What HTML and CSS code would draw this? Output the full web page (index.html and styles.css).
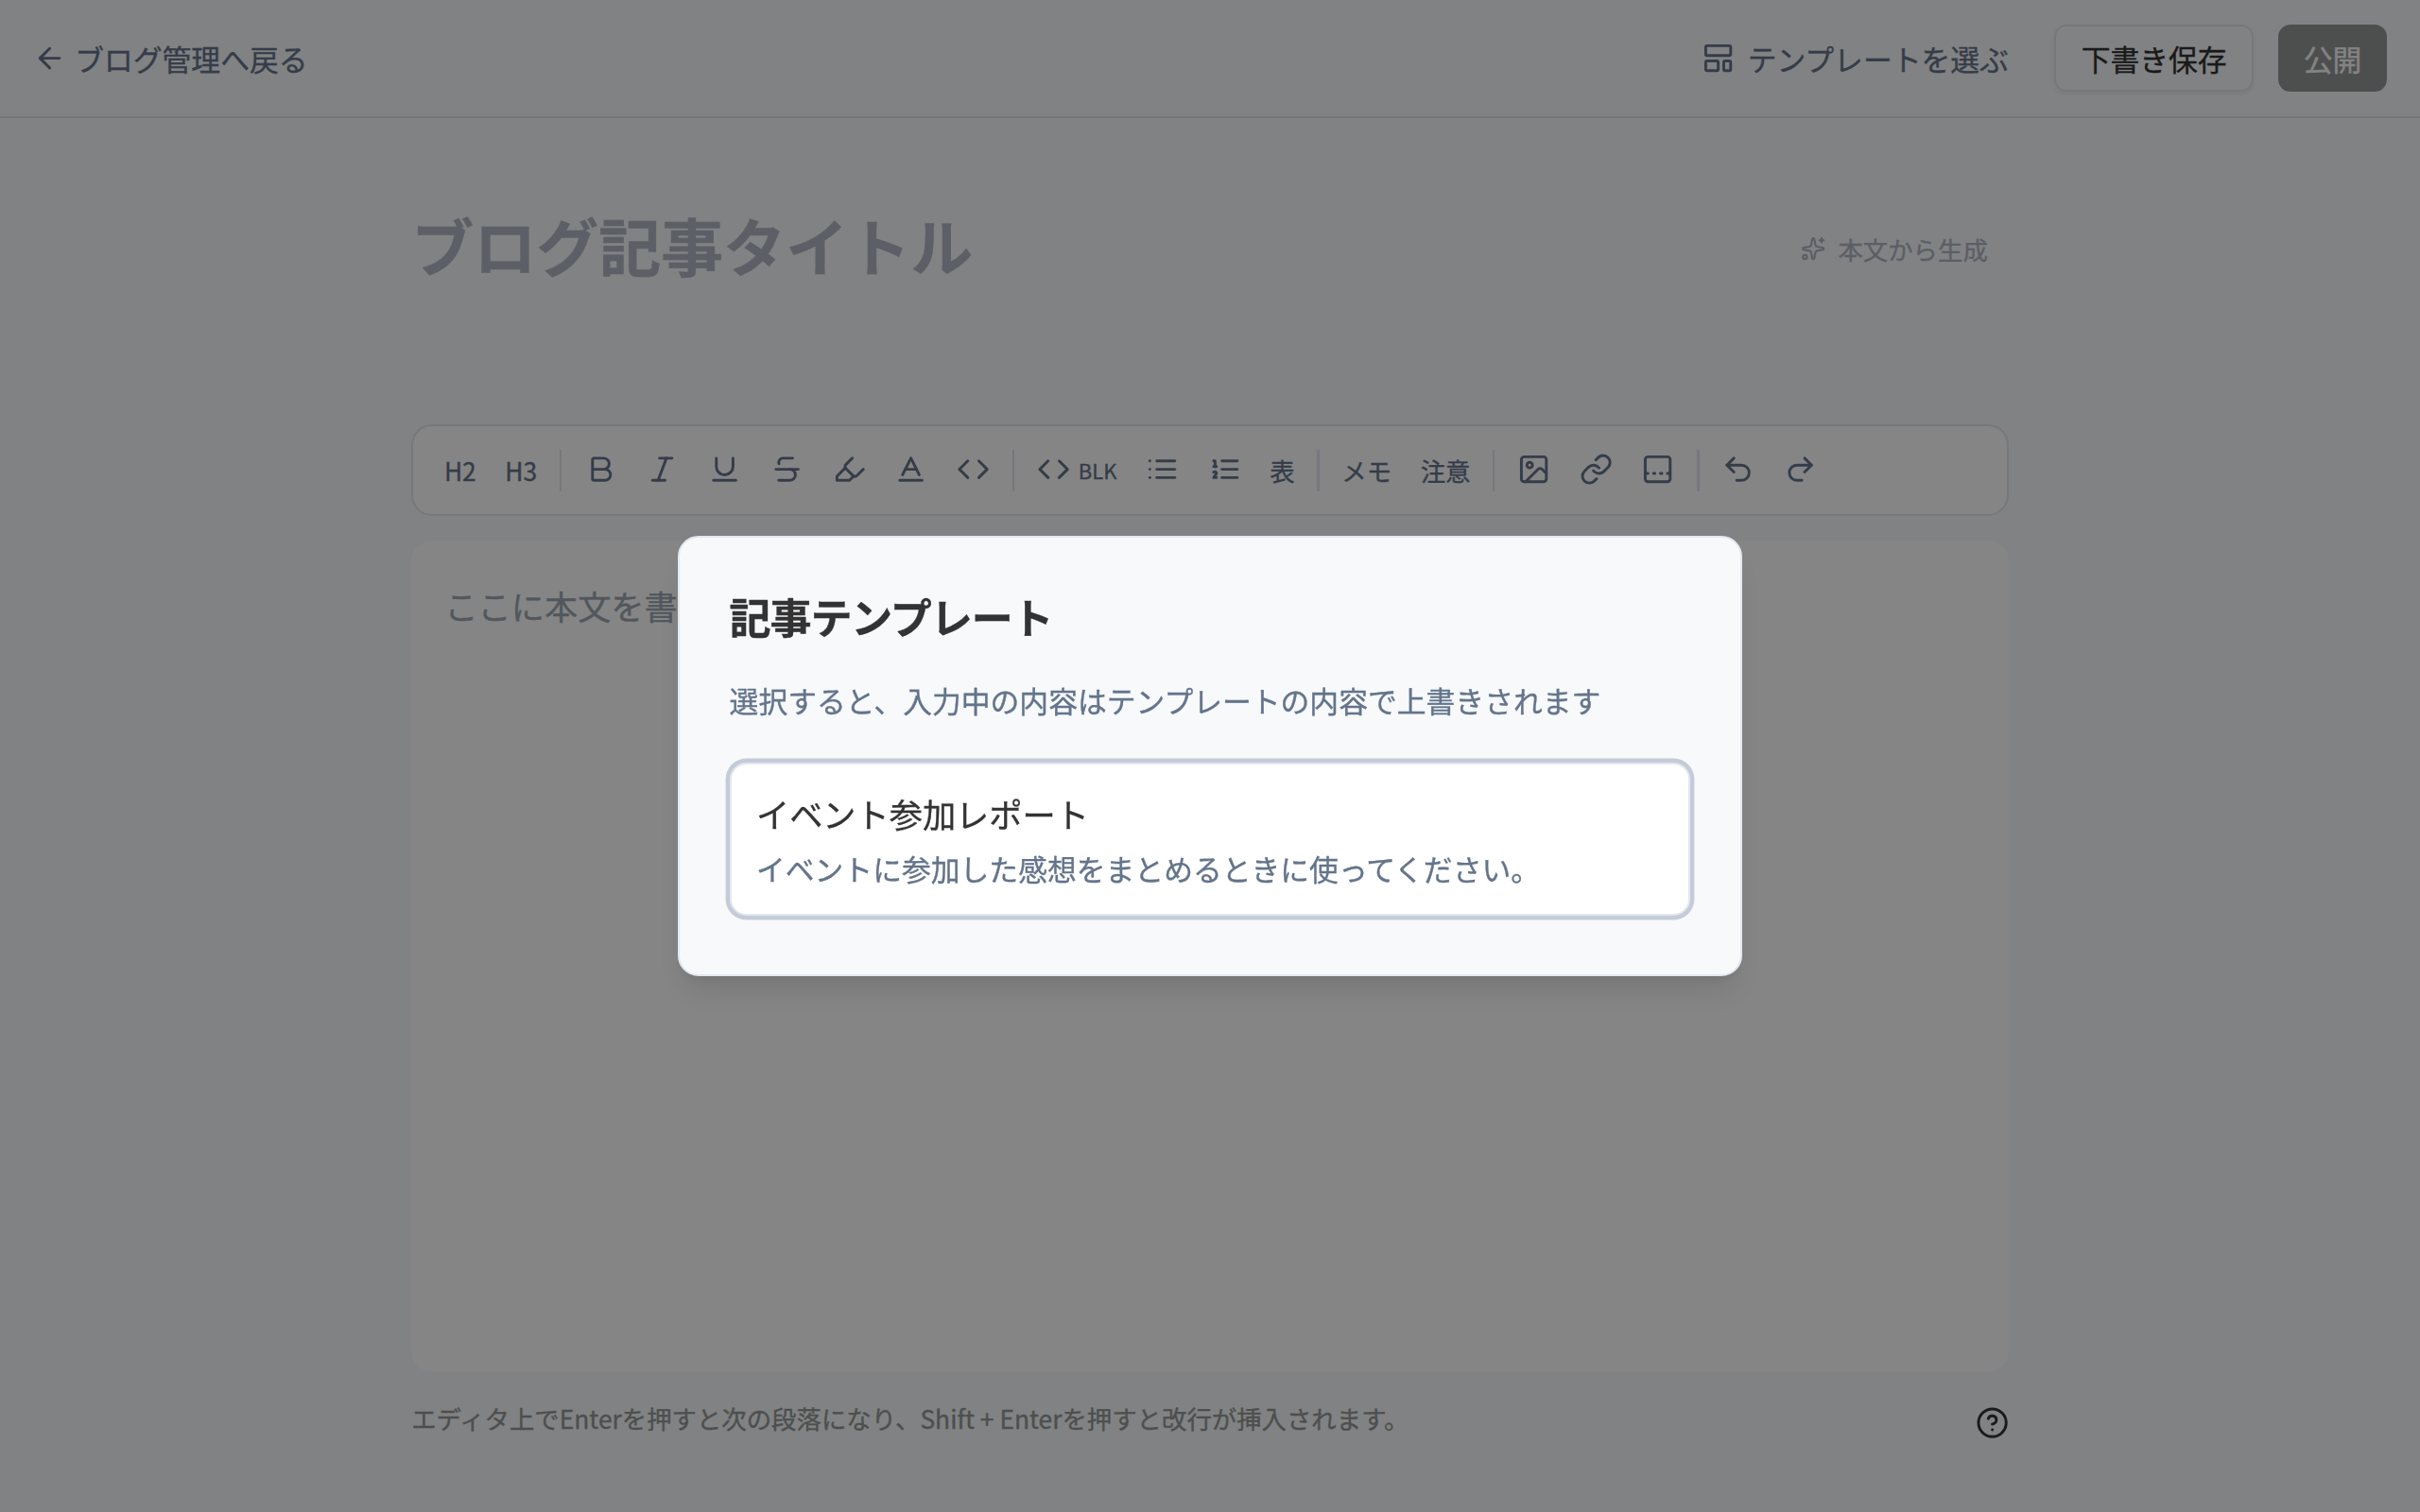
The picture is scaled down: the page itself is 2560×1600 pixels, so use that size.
FILE: index.html
```html
<!DOCTYPE html>
<html lang="ja">
<head>
  <meta charset="UTF-8" />
  <meta name="viewport" content="width=device-width, initial-scale=1.0"/>
  <title>ブログ記事の作成</title>
  <link rel="stylesheet" href="styles.css">
</head>
<body>

  <header class="header">
    <a href="#" class="back">
      <svg class="icon" viewBox="0 0 24 24"><path d="m12 19-7-7 7-7"/><path d="M19 12H5"/></svg>
      ブログ管理へ戻る
    </a>
    <div class="actions">
      <button class="btn btn-ghost">
        <svg class="icon" viewBox="0 0 24 24"><rect x="3" y="3" width="18" height="7" rx="1"/><rect x="3" y="14" width="9" height="7" rx="1"/><rect x="16" y="14" width="5" height="7" rx="1"/></svg>
        テンプレートを選ぶ
      </button>
      <button class="btn btn-outline">下書き保存</button>
      <button class="btn btn-primary">公開</button>
    </div>
  </header>

  <main class="container">
    <div class="title-row">
      <h1 class="title">ブログ記事タイトル</h1>
      <button class="btn btn-generate">
        <svg class="icon" viewBox="0 0 24 24"><path d="M11.017 2.814a1 1 0 0 1 1.966 0l1.051 5.558a2 2 0 0 0 1.594 1.594l5.558 1.051a1 1 0 0 1 0 1.966l-5.558 1.051a2 2 0 0 0-1.594 1.594l-1.051 5.558a1 1 0 0 1-1.966 0l-1.051-5.558a2 2 0 0 0-1.594-1.594l-5.558-1.051a1 1 0 0 1 0-1.966l5.558-1.051a2 2 0 0 0 1.594-1.594z"/><path d="M20 2v4"/><path d="M22 4h-4"/><circle cx="4" cy="20" r="2"/></svg>
        本文から生成
      </button>
    </div>

    <div class="toolbar">
      <button class="tool">H2</button>
      <button class="tool">H3</button>
      <span class="separator"></span>
      <button class="tool"><svg class="icon" viewBox="0 0 24 24"><path d="M6 12h9a4 4 0 0 1 0 8H7a1 1 0 0 1-1-1V5a1 1 0 0 1 1-1h7a4 4 0 0 1 0 8"/></svg></button>
      <button class="tool"><svg class="icon" viewBox="0 0 24 24"><path d="M19 4h-9"/><path d="M14 20H5"/><path d="M15 4 9 20"/></svg></button>
      <button class="tool"><svg class="icon" viewBox="0 0 24 24"><path d="M6 4v6a6 6 0 0 0 12 0V4"/><path d="M4 20h16"/></svg></button>
      <button class="tool"><svg class="icon" viewBox="0 0 24 24"><path d="M16 4H9a3 3 0 0 0-2.83 4"/><path d="M14 12a4 4 0 0 1 0 8H6"/><path d="M4 12h16"/></svg></button>
      <button class="tool"><svg class="icon" viewBox="0 0 24 24"><path d="m9 11-6 6v3h9l3-3"/><path d="m22 12-4.6 4.6a2 2 0 0 1-2.8 0l-5.2-5.2a2 2 0 0 1 0-2.8L14 4"/></svg></button>
      <button class="tool"><svg class="icon" viewBox="0 0 24 24"><path d="M4 20h16"/><path d="m6 16 6-12 6 12"/><path d="M8 12h8"/></svg></button>
      <button class="tool"><svg class="icon" viewBox="0 0 24 24"><path d="m16 18 6-6-6-6"/><path d="m8 6-6 6 6 6"/></svg></button>
      <span class="separator"></span>
      <button class="tool">
        <svg class="icon" viewBox="0 0 24 24"><path d="m16 18 6-6-6-6"/><path d="m8 6-6 6 6 6"/></svg>
        <span class="tool-label">BLK</span>
      </button>
      <button class="tool"><svg class="icon" viewBox="0 0 24 24"><path d="M3 6h.01"/><path d="M3 12h.01"/><path d="M3 18h.01"/><path d="M8 6h13"/><path d="M8 12h13"/><path d="M8 18h13"/></svg></button>
      <button class="tool"><svg class="icon" viewBox="0 0 24 24"><path d="M10 6h11"/><path d="M10 12h11"/><path d="M10 18h11"/><path d="M4 6h1v4"/><path d="M4 10h2"/><path d="M6 18H4c0-1 2-2 2-3s-1-1.5-2-1"/></svg></button>
      <button class="tool">表</button>
      <span class="separator"></span>
      <button class="tool">メモ</button>
      <button class="tool">注意</button>
      <span class="separator"></span>
      <button class="tool"><svg class="icon" viewBox="0 0 24 24"><rect x="3" y="3" width="18" height="18" rx="2"/><circle cx="9" cy="9" r="2"/><path d="m21 15-3.086-3.086a2 2 0 0 0-2.828 0L6 21"/></svg></button>
      <button class="tool"><svg class="icon" viewBox="0 0 24 24"><path d="M10 13a5 5 0 0 0 7.54.54l3-3a5 5 0 0 0-7.07-7.07l-1.72 1.71"/><path d="M14 11a5 5 0 0 0-7.54-.54l-3 3a5 5 0 0 0 7.07 7.07l1.71-1.71"/></svg></button>
      <button class="tool"><svg class="icon" viewBox="0 0 24 24"><rect x="3" y="3" width="18" height="18" rx="2"/><path d="M14 15h1"/><path d="M19 15h2"/><path d="M3 15h2"/><path d="M9 15h1"/></svg></button>
      <span class="separator"></span>
      <button class="tool"><svg class="icon" viewBox="0 0 24 24"><path d="M9 14 4 9l5-5"/><path d="M4 9h10.5a5.5 5.5 0 0 1 0 11H11"/></svg></button>
      <button class="tool"><svg class="icon" viewBox="0 0 24 24"><path d="m15 14 5-5-5-5"/><path d="M20 9H9.500a5.500 5.500 0 0 0 0 11H13"/></svg></button>
    </div>

    <div class="editor">
      <p class="placeholder">ここに本文を書</p>
    </div>

    <div class="footer">
      <p>エディタ上でEnterを押すと次の段落になり、Shift + Enterを押すと改行が挿入されます。</p>
      <svg class="icon help" viewBox="0 0 24 24"><circle cx="12" cy="12" r="10"/><path d="M9.090 9a3 3 0 0 1 5.830 1c0 2-3 3-3 3"/><path d="M12 17h.01"/></svg>
    </div>
  </main>

  <div class="overlay">
    <div class="modal">
      <h2>記事テンプレート</h2>
      <p class="modal-text">選択すると、入力中の内容はテンプレートの内容で上書きされます</p>
      <button class="template">
        <span class="template-name">イベント参加レポート</span>
        <span class="template-text">イベントに参加した感想をまとめるときに使ってください。</span>
      </button>
    </div>
  </div>

</body>
</html>
```
FILE: styles.css
```css
* {
  box-sizing: border-box;
}

body {
  font-family: "Noto Sans CJK JP", sans-serif;
  background-color: #f7f9fb;
  color: #333;
  margin: 0;
  height: 100vh;
  overflow: hidden;
  -webkit-text-stroke: 0.35px;
}

h1, h2, p {
  margin: 0;
}

button {
  font-family: inherit;
  border: none;
  background: none;
  padding: 0;
  color: inherit;
  cursor: pointer;
}

.icon {
  width: 35.2px;
  height: 35.2px;
  flex-shrink: 0;
  fill: none;
  stroke: currentColor;
  stroke-width: 2;
  stroke-linecap: round;
  stroke-linejoin: round;
}

/* header */
.header {
  display: flex;
  justify-content: space-between;
  align-items: center;
  height: 125px;
  padding: 0 35.2px;
  border-bottom: 2px solid #e0e6ee;
}

.back {
  display: flex;
  align-items: center;
  gap: 8.8px;
  font-size: 30.8px;
  color: #67748c;
  text-decoration: none;
}

.actions {
  display: flex;
  align-items: center;
  gap: 26.4px;
}

.btn {
  display: flex;
  align-items: center;
  height: 70.4px;
  padding: 0 26.4px;
  border-radius: 13.2px;
  font-size: 30.8px;
  white-space: nowrap;
}

.btn-ghost {
  gap: 13.2px;
  padding: 0 22px;
  color: #67748c;
}

.btn-outline {
  border: 2px solid #e0e6ee;
  box-shadow: 0 2.2px 4.4px rgba(0, 0, 0, 0.05);
}

.btn-primary {
  background-color: #333833;
  color: #fff;
  opacity: 0.5;
}

.btn-generate {
  gap: 13.2px;
  padding: 0 22px;
  font-size: 26.4px;
  color: #67748c;
  opacity: 0.5;
}

.btn-generate .icon {
  width: 26.4px;
  height: 26.4px;
}

/* editor */
.container {
  width: 1689.6px;
  margin: 0 auto;
  padding-top: 103px;
}

.title-row {
  display: flex;
  justify-content: space-between;
  align-items: center;
  height: 70.4px;
  margin-bottom: 151px;
}

.title {
  padding-bottom: 9px;
  font-size: 66px;
  font-weight: 700;
  line-height: 1.2;
  color: #b2b7c5;
}

.toolbar {
  display: flex;
  align-items: center;
  gap: 4.15px;
  height: 96.8px;
  padding: 0 19.5px;
  border: 2px solid #e0e6ee;
  border-radius: 22px;
  background-color: #fff;
}

.tool {
  display: flex;
  align-items: center;
  gap: 8.8px;
  height: 61.6px;
  padding: 0 13.2px;
  font-size: 26.4px;
  color: #67748c;
}

.tool .icon {
  margin-bottom: 2px;
}

.tool-label {
  padding-bottom: 2px;
  font-size: 22px;
}

.separator {
  width: 2.2px;
  height: 44px;
  margin: 0 6.4px;
  background-color: #e0e6ee;
}

.editor {
  height: 880px;
  margin-top: 25.6px;
  padding: 35.2px;
  border-radius: 22px;
  background-color: #fff;
}

.placeholder {
  font-size: 35.2px;
  line-height: 67.5px;
  color: #9ca7b3;
}

.footer {
  display: flex;
  justify-content: space-between;
  align-items: flex-start;
  margin-top: 30.8px;
  font-size: 26.4px;
  line-height: 35.2px;
  color: #949896;
}

.help {
  margin-top: 5px;
  color: #333;
}

/* template modal */
.overlay {
  position: fixed;
  inset: 0;
  display: flex;
  align-items: center;
  justify-content: center;
  background-color: rgba(0, 0, 0, 0.48);
}

.modal {
  width: 1126.4px;
  padding: 52.8px 52.8px 61.6px;
  border: 2px solid #e2e8f0;
  border-radius: 22px;
  background-color: #f7f9fb;
  box-shadow: 0 22px 33px -6.6px rgba(0, 0, 0, 0.1), 0 8.8px 13.2px -8.8px rgba(0, 0, 0, 0.1);
}

.modal h2 {
  font-size: 44px;
  font-weight: 700;
  line-height: 61.6px;
  letter-spacing: -0.025em;
}

.modal-text {
  margin: 35.2px 0 44px;
  font-size: 30.8px;
  line-height: 44px;
  color: #64748b;
}

.template {
  display: flex;
  flex-direction: column;
  gap: 8.8px;
  width: 100%;
  padding: 26.4px;
  border: 2px solid #e2e8f0;
  border-radius: 17.6px;
  background-color: #fff;
  box-shadow: 0 0 0 4.4px #c5cbd8;
  text-align: left;
}

.template-name {
  font-size: 35.2px;
  line-height: 52.8px;
}

.template-text {
  font-size: 30.8px;
  line-height: 44px;
  color: #64748b;
}
```
